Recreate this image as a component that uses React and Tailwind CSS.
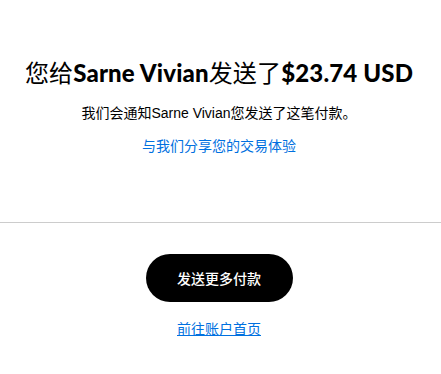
import React from 'react';

function App() {
  return (
    <div className="min-h-[374px] w-full bg-white pt-[56px] text-center text-black">
      {/* Message */}
      <div className="pr-[3px]">
        <h1 className="font-['Lato','Noto_Sans_CJK_SC',sans-serif] text-[24px] font-black leading-[32px] tracking-[0.15px]">
          <span className="font-normal font-['Noto_Sans_CJK_SC',sans-serif]">您给</span>
          Sarne Vivian
          <span className="font-normal font-['Noto_Sans_CJK_SC',sans-serif]">发送了</span>
          $23.74 USD
        </h1>

        <p className="mt-[14px] font-['Liberation_Sans','Noto_Sans_CJK_SC',sans-serif] text-[14px] leading-[20px]">
          我们会通知Sarne Vivian您发送了这笔付款。
        </p>

        <a href="#" className="mx-auto mt-[13px] block w-fit font-['Liberation_Sans','Noto_Sans_CJK_SC',sans-serif] text-[14px] leading-[20px] text-[#0070e0]">
          与我们分享您的交易体验
        </a>
      </div>

      <div className="mt-[66px] h-px w-full bg-[#cccccc]" />

      {/* Actions */}
      <div className="mt-[31px] flex flex-col items-center pr-[3px]">
        <button className="h-[48px] w-[147px] rounded-full bg-black font-['Noto_Sans_CJK_SC',sans-serif] text-[14px] font-medium text-white">
          发送更多付款
        </button>
        <a href="#" className="mt-[16px] font-['Noto_Sans_CJK_SC',sans-serif] text-[14px] leading-[20px] text-[#0070e0] underline">
          前往账户首页
        </a>
      </div>
    </div>
  );
}

export default App;
